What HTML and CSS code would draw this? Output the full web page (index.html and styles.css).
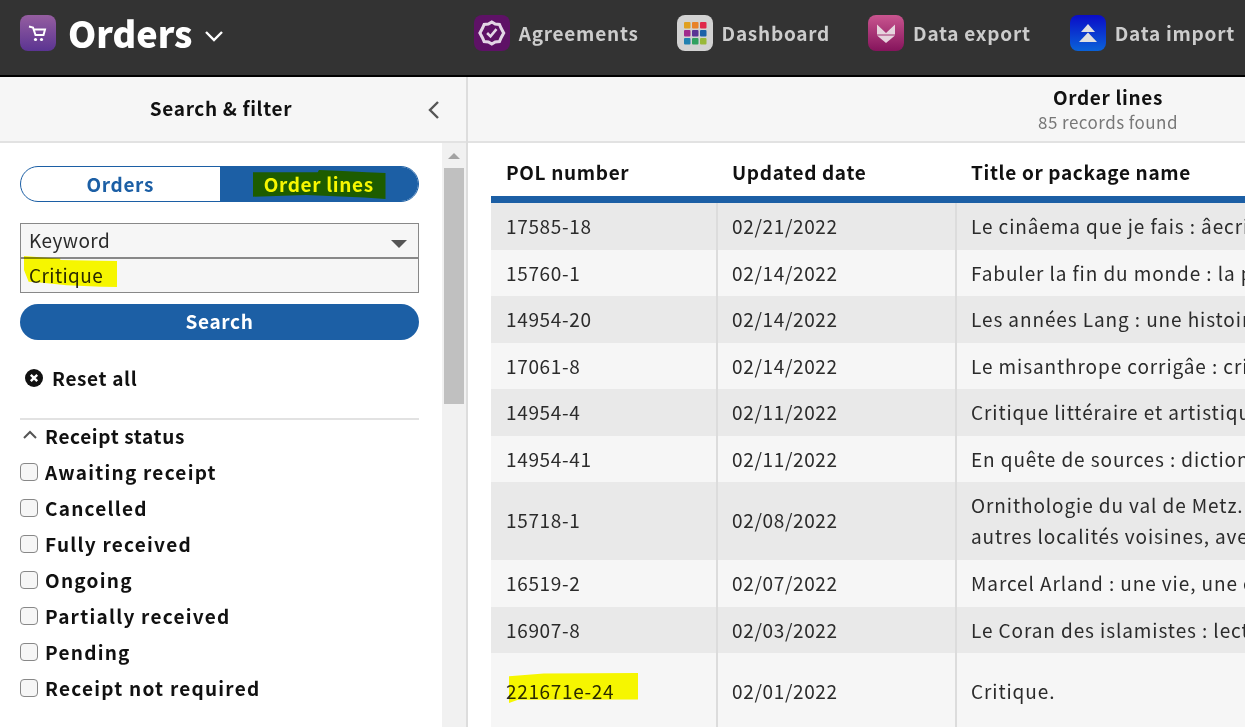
FILE: index.html
```html
<!DOCTYPE html>
<html lang="en">
<head>
    <meta charset="UTF-8">
    <meta name="viewport" content="width=device-width, initial-scale=1.0">
    <title>Orders</title>
    <link rel="stylesheet" href="styles.css">
</head>
<body>

    <!-- Top app bar -->
    <div class="topbar">
        <div class="current-app">
            <span class="app-icon orders-icon">
                <svg viewBox="0 0 36 36" width="36" height="36"><path d="M9 11.500l4 1 2.500 7.500h8l1.500-5.500H13.500" fill="none" stroke="#fff" stroke-width="2"/><circle cx="15.500" cy="24.500" r="1.600" fill="#fff"/><circle cx="21.500" cy="24.500" r="1.600" fill="#fff"/></svg>
            </span>
            <span class="app-name">Orders</span>
            <svg class="app-caret" viewBox="0 0 20 12" width="20" height="12"><path d="M2 2l8 8 8-8" fill="none" stroke="#fff" stroke-width="2.400"/></svg>
        </div>
        <div class="app-links">
            <a class="app-link link-agreements"><span class="app-icon agreements-icon">
                <svg viewBox="0 0 36 36" width="36" height="36"><g transform="translate(2.500 2.700) scale(0.850)"><path d="M18 5l4 2.500 5 .500 2 4.500 3 5.500-3 5.500-2 4.500-5 .500-4 2.500-4-2.500-5-.500-2-4.500-3-5.500 3-5.500 2-4.500 5-.500z" fill="none" stroke="#e3d6e6" stroke-width="3.600"/><path d="M12.500 18l4 4 7-8.500" fill="none" stroke="#e3d6e6" stroke-width="3"/></g></svg>
            </span>Agreements</a>
            <a class="app-link link-dashboard"><span class="app-icon dashboard-icon">
                <svg viewBox="0 0 36 36" width="36" height="36">
                    <rect x="7" y="7" width="6.500" height="6.500" rx="1" fill="#e0a020"/><rect x="15" y="7" width="6.500" height="6.500" rx="1" fill="#e8822a"/><rect x="23" y="7" width="6.500" height="6.500" rx="1" fill="#e0284a"/>
                    <rect x="7" y="15" width="6.500" height="6.500" rx="1" fill="#a02a8c"/><rect x="15" y="15" width="6.500" height="6.500" rx="1" fill="#5a3594"/><rect x="23" y="15" width="6.500" height="6.500" rx="1" fill="#1c62a8"/>
                    <rect x="7" y="23" width="6.500" height="6.500" rx="1" fill="#2080b0"/><rect x="15" y="23" width="6.500" height="6.500" rx="1" fill="#30a060"/><rect x="23" y="23" width="6.500" height="6.500" rx="1" fill="#98b838"/>
                </svg>
            </span>Dashboard</a>
            <a class="app-link link-export"><span class="app-icon export-icon">
                <svg viewBox="0 0 36 36" width="36" height="36"><path d="M9 9.500l9 8.500 9-8.500v10H9z" fill="#e6d5de"/><path d="M9 20.500h18l-9 7.500z" fill="#e6d5de"/></svg>
            </span>Data export</a>
            <a class="app-link link-import"><span class="app-icon import-icon">
                <svg viewBox="0 0 36 36" width="36" height="36"><path d="M18 9l7 8H11z" fill="#e0e0e0"/><path d="M18 17.500l9 9.500H9z" fill="#e0e0e0"/></svg>
            </span>Data import</a>
        </div>
    </div>

    <div class="main">
        <!-- Filter pane -->
        <div class="filter-pane">
            <div class="pane-head">
                <span class="pane-title">Search &amp; filter</span>
                <svg class="pane-collapse" viewBox="0 0 12 20" width="12" height="20"><path d="M10 2l-8 8 8 8" fill="none" stroke="#555" stroke-width="2.400"/></svg>
            </div>
            <div class="pane-scroll">
                <div class="pane-body">
                    <div class="segmented">
                        <span class="segment">Orders</span>
                        <span class="segment active"><span class="scribble scribble-green"></span><span class="segment-label">Order lines</span></span>
                    </div>

                    <div class="search-box">
                        <div class="search-select">Keyword <span class="select-arrow"></span></div>
                        <div class="search-input">Critique</div>
                        <span class="scribble scribble-critique"></span>
                    </div>
                    <button class="search-btn">Search</button>

                    <div class="reset-all">
                        <svg viewBox="0 0 18 18" width="18" height="18"><circle cx="9" cy="9" r="9" fill="#111"/><path d="M5.800 5.800l6.400 6.400M12.200 5.800l-6.400 6.400" stroke="#fff" stroke-width="2.400"/></svg>
                        Reset all
                    </div>

                    <div class="filter-group">
                        <div class="group-head">
                            <svg viewBox="0 0 16 10" width="16" height="10"><path d="M2 8l6-6 6 6" fill="none" stroke="#555" stroke-width="2"/></svg>
                            Receipt status
                        </div>
                        <label class="check-row"><span class="check"></span>Awaiting receipt</label>
                        <label class="check-row"><span class="check"></span>Cancelled</label>
                        <label class="check-row"><span class="check"></span>Fully received</label>
                        <label class="check-row"><span class="check"></span>Ongoing</label>
                        <label class="check-row"><span class="check"></span>Partially received</label>
                        <label class="check-row"><span class="check"></span>Pending</label>
                        <label class="check-row"><span class="check"></span>Receipt not required</label>
                    </div>
                </div>
                <div class="scrollbar">
                    <span class="scroll-up"></span>
                    <span class="scroll-thumb"></span>
                </div>
            </div>
        </div>

        <!-- Results pane -->
        <div class="results-pane">
            <div class="results-head">
                <div class="results-title">Order lines</div>
                <div class="results-count">85 records found</div>
            </div>
            <div class="results-body">
                <div class="table">
                    <div class="row head-row">
                        <div class="cell col-pol">POL number</div>
                        <div class="cell col-date">Updated date</div>
                        <div class="cell col-title">Title or package name</div>
                    </div>
                    <div class="row">
                        <div class="cell col-pol">17585-18</div>
                        <div class="cell col-date">02/21/2022</div>
                        <div class="cell col-title">Le cinâema que je fais : âecrits et entretiens</div>
                    </div>
                    <div class="row">
                        <div class="cell col-pol">15760-1</div>
                        <div class="cell col-date">02/14/2022</div>
                        <div class="cell col-title">Fabuler la fin du monde : la puissance critique des fictions</div>
                    </div>
                    <div class="row">
                        <div class="cell col-pol">14954-20</div>
                        <div class="cell col-date">02/14/2022</div>
                        <div class="cell col-title">Les années Lang : une histoire de la politique culturelle</div>
                    </div>
                    <div class="row">
                        <div class="cell col-pol">17061-8</div>
                        <div class="cell col-date">02/14/2022</div>
                        <div class="cell col-title">Le misanthrope corrigâe : critique de la comédie</div>
                    </div>
                    <div class="row">
                        <div class="cell col-pol">14954-4</div>
                        <div class="cell col-date">02/11/2022</div>
                        <div class="cell col-title">Critique littéraire et artistique au dix-neuvième siècle</div>
                    </div>
                    <div class="row">
                        <div class="cell col-pol">14954-41</div>
                        <div class="cell col-date">02/11/2022</div>
                        <div class="cell col-title">En quête de sources : dictionnaire critique des revues</div>
                    </div>
                    <div class="row tall-row">
                        <div class="cell col-pol">15718-1</div>
                        <div class="cell col-date">02/08/2022</div>
                        <div class="cell col-title wrap">Ornithologie du val de Metz. Vol. 1<br>autres localités voisines, avec une critique des sources</div>
                    </div>
                    <div class="row">
                        <div class="cell col-pol">16519-2</div>
                        <div class="cell col-date">02/07/2022</div>
                        <div class="cell col-title">Marcel Arland : une vie, une critique et une oeuvre</div>
                    </div>
                    <div class="row">
                        <div class="cell col-pol">16907-8</div>
                        <div class="cell col-date">02/03/2022</div>
                        <div class="cell col-title">Le Coran des islamistes : lecture critique d'un texte</div>
                    </div>
                    <div class="row last-row">
                        <div class="cell col-pol">221671e-24<span class="scribble scribble-pol"></span></div>
                        <div class="cell col-date">02/01/2022</div>
                        <div class="cell col-title">Critique.</div>
                    </div>
                </div>
            </div>
        </div>
    </div>

</body>
</html>
```

FILE: styles.css
```css
* {
    box-sizing: border-box;
}

html, body {
    height: 100%;
}

body {
    margin: 0;
    overflow: hidden;
    font-family: "Noto Sans CJK SC", "Noto Sans", sans-serif;
    font-size: 19px;
    letter-spacing: 0.65px;
    color: #2b2b2b;
    background-color: #fff;
}

/* Top bar */
.topbar {
    display: flex;
    justify-content: space-between;
    align-items: center;
    height: 77px;
    padding: 0 10px 10px 20px;
    background-color: #333;
    border-bottom: 2px solid #000;
}

.current-app {
    display: flex;
    align-items: center;
}

.app-icon {
    display: block;
    width: 36px;
    height: 36px;
    border-radius: 8px;
    overflow: hidden;
}

.orders-icon {
    background: linear-gradient(#955ea0, #5b3492);
}

.app-name {
    margin: -2px 0 0 12px;
    font-size: 36px;
    line-height: 44px;
    font-weight: 900;
    letter-spacing: 0;
    color: #fff;
}

.app-caret {
    margin: 6px 0 0 12px;
}

.app-links {
    display: flex;
    letter-spacing: 0.75px;
}

.app-link {
    display: flex;
    align-items: center;
    gap: 9px;
    font-weight: 700;
    line-height: 36px;
    color: #ccc;
}

.link-dashboard {
    margin-left: 38px;
}

.link-export {
    margin-left: 38px;
}

.link-import {
    margin-left: 39px;
}

.agreements-icon {
    background-color: #5e1266;
}

.dashboard-icon {
    background-color: #d2d2d2;
}

.export-icon {
    background: linear-gradient(#c9558f, #85145c);
}

.import-icon {
    background: linear-gradient(#0a0cc8, #0a62d8);
}

.main {
    display: flex;
    height: 650px;
}

/* Filter pane */
.filter-pane {
    flex: 0 0 468px;
    border-right: 2px solid #ddd;
}

.pane-head {
    display: flex;
    justify-content: center;
    align-items: center;
    position: relative;
    height: 66px;
    padding: 0 24px 2px 0;
    background-color: #f6f6f6;
    border-bottom: 2px solid #e2e2e2;
}

.pane-title {
    font-weight: 700;
    line-height: 28px;
    color: #111;
}

.pane-collapse {
    position: absolute;
    right: 26px;
    top: 23px;
}

.pane-scroll {
    display: flex;
    height: 584px;
}

.pane-body {
    flex: 1;
    padding: 23px 23px 0 20px;
}

.segmented {
    display: flex;
    height: 36px;
    border: 1px solid #1c5fa5;
    border-radius: 18px;
    overflow: hidden;
}

.segment {
    flex: 1;
    position: relative;
    text-align: center;
    font-weight: 700;
    line-height: 33px;
    color: #1c5fa5;
}

.segment.active {
    background-color: #1c5fa5;
    color: #f7f700;
}

.segment-label {
    position: relative;
}

/* Hand-drawn highlighter marks on the screenshot */
.scribble {
    position: absolute;
    display: block;
}

.scribble-green {
    left: 33px;
    top: 3px;
    width: 133px;
    height: 29px;
    background-color: #1d5c00;
    clip-path: polygon(0 8%, 49% 8%, 50% 0, 64% 3%, 86% 8%, 100% 10%, 100% 100%, 84% 95%, 40% 86%, 0 92%);
}

.scribble-critique {
    left: 3px;
    top: 32px;
    width: 93px;
    height: 31px;
    background-color: #ffff00;
    mix-blend-mode: multiply;
    clip-path: polygon(0 0, 17% 4%, 39% 8%, 39% 13%, 82% 15%, 100% 16%, 100% 100%, 83% 99%, 46% 94%, 20% 86%, 5% 83%, 0 45%);
}

.scribble-pol {
    left: 18px;
    top: 20px;
    width: 129px;
    height: 30px;
    background-color: #ffff00;
    mix-blend-mode: multiply;
    clip-path: polygon(0 11%, 27% 2%, 100% 0, 100% 88%, 7% 89%, 0 100%);
}

.search-box {
    position: relative;
    margin-top: 21px;
    border: 1px solid #888;
    background-color: #f6f6f6;
    letter-spacing: 0.4px;
}

.search-select {
    position: relative;
    height: 35px;
    padding-left: 8px;
    line-height: 32px;
    border-bottom: 2px solid #888;
}

.select-arrow {
    position: absolute;
    right: 11px;
    top: 16px;
    border-top: 8px solid #555;
    border-left: 8px solid transparent;
    border-right: 8px solid transparent;
}

.search-input {
    height: 33px;
    padding-left: 8px;
    line-height: 32px;
}

.search-btn {
    display: block;
    width: 100%;
    height: 36px;
    margin-top: 11px;
    padding-bottom: 4px;
    border: none;
    border-radius: 18px;
    background-color: #1c5fa5;
    color: #fff;
    font: inherit;
    font-weight: 700;
    letter-spacing: inherit;
}

.reset-all {
    display: flex;
    align-items: center;
    gap: 9px;
    margin-top: 24px;
    padding-left: 5px;
    font-weight: 700;
    line-height: 28px;
    color: #111;
}

.filter-group {
    margin-top: 26px;
    padding-top: 1px;
    border-top: 2px solid #e2e2e2;
}

.group-head {
    display: flex;
    align-items: center;
    gap: 7px;
    padding-left: 2px;
    height: 28px;
    font-weight: 700;
    color: #111;
}

.check-row {
    display: flex;
    align-items: center;
    gap: 7px;
    height: 36px;
    padding-top: 8px;
    font-weight: 700;
    letter-spacing: 1.25px;
    color: #111;
}

.check {
    width: 18px;
    height: 18px;
    margin-top: 2px;
    border: 1px solid #888;
    border-radius: 4px;
    background-color: #f6f6f6;
}

.scrollbar {
    flex: 0 0 24px;
    position: relative;
    background-color: #f1f1f1;
}

.scroll-up {
    position: absolute;
    left: 6px;
    top: 10px;
    border-bottom: 6px solid #a3a3a3;
    border-left: 6px solid transparent;
    border-right: 6px solid transparent;
}

.scroll-thumb {
    position: absolute;
    left: 2px;
    right: 2px;
    top: 25px;
    height: 236px;
    background-color: #c0c0c0;
}

/* Results pane runs past the right edge of the window */
.results-pane {
    flex: 0 0 1280px;
}

.results-head {
    height: 66px;
    padding-top: 7px;
    text-align: center;
    background-color: #f6f6f6;
    border-bottom: 2px solid #e2e2e2;
}

.results-title {
    font-weight: 700;
    line-height: 26px;
    color: #111;
}

.results-count {
    margin-top: 1px;
    font-size: 17px;
    line-height: 22px;
    letter-spacing: 0.45px;
    color: #777;
}

.results-body {
    padding-left: 23px;
}

.row {
    display: flex;
    height: 46.500px;
    line-height: 45px;
    background-color: #f6f6f6;
}

.row:nth-child(even) {
    background-color: #e9e9e9;
}

.head-row {
    height: 60px;
    line-height: 58px;
    font-weight: 700;
    color: #111;
    background-color: #fff;
    border-bottom: 7px solid #1c5fa5;
}

.tall-row {
    height: 78px;
    line-height: 76px;
}

.last-row {
    height: 74px;
    line-height: 76px;
}

.cell {
    position: relative;
    padding-left: 15px;
    white-space: nowrap;
}

.col-pol {
    flex: 0 0 225px;
}

.col-date {
    flex: 0 0 239px;
    padding-left: 14px;
    border-left: 2px solid #dcdcdc;
}

.col-title {
    flex: 0 0 auto;
    padding-left: 14px;
    border-left: 2px solid #dcdcdc;
    letter-spacing: 0.9px;
}

.head-row .col-date,
.head-row .col-title {
    border-left-color: transparent;
    letter-spacing: 0.65px;
}

.tall-row .wrap {
    padding-top: 7px;
    line-height: 31px;
}
```
